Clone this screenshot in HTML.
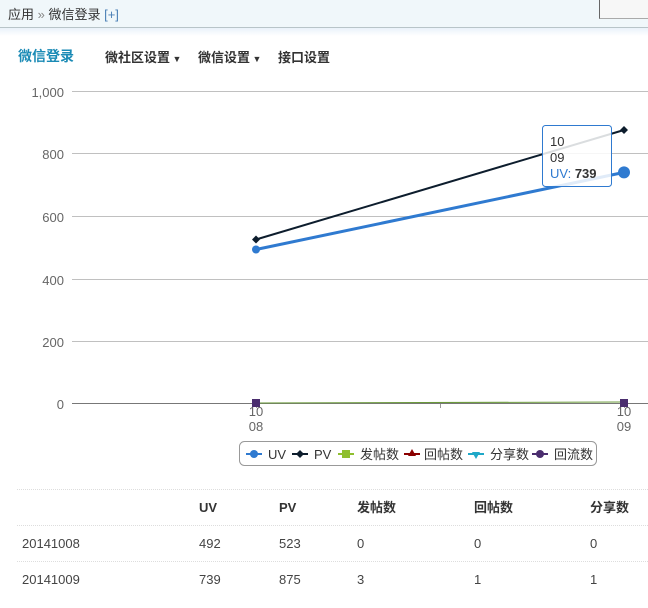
<!DOCTYPE html>
<html><head><meta charset="utf-8"><style>
body{margin:0;width:648px;height:608px;overflow:hidden;background:#fff;font-family:"Liberation Sans","Noto Sans CJK SC",sans-serif;position:relative}
.top{position:absolute;left:0;top:0;width:648px;height:27px;background:#f0f7fa;border-bottom:1px solid #b8c4c8}
.top span{position:absolute;top:4px;font-size:13px;color:#333}
.sh{position:absolute;left:0;top:28px;width:648px;height:8px;background:linear-gradient(#eaf2fa,#fff)}
.box{position:absolute;left:599px;top:0;width:49px;height:18px;background:#f7f7f7;border-left:1px solid #666;border-bottom:1px solid #aaa}
.nav{position:absolute;top:47px;font-size:13px;font-weight:bold;color:#333}
.t{position:absolute;font-size:13px;color:#444;line-height:16px;height:16px}
.th{font-weight:bold;color:#333}
.ln{position:absolute;left:17px;width:631px;border-top:1px dotted #ddd}
</style></head><body>
<div class="top"><span style="left:8px">应用 <span style="position:static;color:#888">»</span> 微信登录 <span style="position:static;color:#4a7fb5">[+]</span></span></div>
<div class="box"></div>
<div class="sh"></div>
<div class="nav" style="left:18px;font-size:14px;color:#1a8ab5;top:46px">微信登录</div>
<div class="nav" style="left:105px">微社区设置<span style="font-size:9px"> ▼</span></div>
<div class="nav" style="left:198px">微信设置<span style="font-size:9px"> ▼</span></div>
<div class="nav" style="left:278px">接口设置</div>
<svg style="position:absolute;left:0;top:0" width="648" height="480" font-family="Liberation Sans,Noto Sans CJK SC,sans-serif">
<g stroke="#c0c0c0" stroke-width="1">
<line x1="72" y1="91.5" x2="648" y2="91.5"/><line x1="72" y1="153.5" x2="648" y2="153.5"/><line x1="72" y1="216.5" x2="648" y2="216.5"/><line x1="72" y1="279.5" x2="648" y2="279.5"/><line x1="72" y1="341.5" x2="648" y2="341.5"/>
</g>
<line x1="72" y1="403.5" x2="648" y2="403.5" stroke="#777"/>
<line x1="256.5" y1="404" x2="256.5" y2="408" stroke="#999"/><line x1="440.5" y1="404" x2="440.5" y2="408" stroke="#999"/><line x1="624.5" y1="404" x2="624.5" y2="408" stroke="#999"/>
<g font-size="13" fill="#666" text-anchor="end">
<text x="64" y="97">1,000</text><text x="64" y="159">800</text><text x="64" y="222">600</text><text x="64" y="285">400</text><text x="64" y="347">200</text><text x="64" y="409">0</text></g>
<g font-size="13" fill="#666" text-anchor="middle">
<text x="256" y="416">10</text><text x="256" y="431">08</text><text x="624" y="416">10</text><text x="624" y="431">09</text></g>
<line x1="256" y1="403" x2="624" y2="402" stroke="#6a9a3a" stroke-width="1"/>
<polyline points="256,239.5 624,130" fill="none" stroke="#0d1d2d" stroke-width="2"/>
<path d="M256 235.5l4 4-4 4-4-4z M624 126l4 4-4 4-4-4z" fill="#0d1d2d"/>
<polyline points="256,249.5 624,172.4" fill="none" stroke="#2f7ad0" stroke-width="3"/>
<circle cx="256" cy="249.5" r="4" fill="#2f7ad0"/><circle cx="624" cy="172.4" r="6" fill="#2f7ad0"/>
<rect x="252" y="399" width="8" height="8" fill="#4a2d6e"/><rect x="620" y="399" width="8" height="8" fill="#4a2d6e"/>
<rect x="542.5" y="125.5" width="69" height="61" rx="3" fill="#fff" fill-opacity="0.85" stroke="#2f7ad0"/>
<text x="550" y="146" font-size="13" fill="#333">10</text>
<text x="550" y="162" font-size="13" fill="#333">09</text>
<text x="550" y="178" font-size="13" fill="#2f7ad0">UV: <tspan fill="#333" font-weight="bold">739</tspan></text>
<rect x="239.5" y="441.5" width="357" height="24" rx="5" fill="#fff" stroke="#999"/>
<g font-size="13" fill="#333">
<line x1="246" y1="454" x2="262" y2="454" stroke="#2f7ad0" stroke-width="2"/><circle cx="254" cy="454" r="4" fill="#2f7ad0"/><text x="268" y="459">UV</text>
<line x1="292" y1="454" x2="308" y2="454" stroke="#0d1d2d" stroke-width="2"/><path d="M300 450l4 4-4 4-4-4z" fill="#0d1d2d"/><text x="314" y="459">PV</text>
<line x1="338" y1="454" x2="354" y2="454" stroke="#8fbf2f" stroke-width="2"/><rect x="342" y="450" width="8" height="8" fill="#8fbf2f"/><text x="360" y="459">发帖数</text>
<line x1="404" y1="454" x2="420" y2="454" stroke="#8b0000" stroke-width="2"/><path d="M412 449l4 7h-8z" fill="#8b0000"/><text x="424" y="459">回帖数</text>
<line x1="468" y1="454" x2="484" y2="454" stroke="#1fa8c8" stroke-width="2"/><path d="M472 452h8l-4 7z" fill="#1fa8c8"/><text x="490" y="459">分享数</text>
<line x1="532" y1="454" x2="548" y2="454" stroke="#4a2d6e" stroke-width="2"/><circle cx="540" cy="454" r="4" fill="#4a2d6e"/><text x="554" y="459">回流数</text>
</g>
</svg>
<div class="ln" style="top:489px"></div><div class="ln" style="top:525px"></div><div class="ln" style="top:561px"></div>
<div class="t th" style="left:199px;top:500px">UV</div><div class="t th" style="left:279px;top:500px">PV</div><div class="t th" style="left:357px;top:500px">发帖数</div><div class="t th" style="left:474px;top:500px">回帖数</div><div class="t th" style="left:590px;top:500px">分享数</div>
<div class="t" style="left:22px;top:536px">20141008</div><div class="t" style="left:199px;top:536px">492</div><div class="t" style="left:279px;top:536px">523</div><div class="t" style="left:357px;top:536px">0</div><div class="t" style="left:474px;top:536px">0</div><div class="t" style="left:590px;top:536px">0</div>
<div class="t" style="left:22px;top:572px">20141009</div><div class="t" style="left:199px;top:572px">739</div><div class="t" style="left:279px;top:572px">875</div><div class="t" style="left:357px;top:572px">3</div><div class="t" style="left:474px;top:572px">1</div><div class="t" style="left:590px;top:572px">1</div>
</body></html>
